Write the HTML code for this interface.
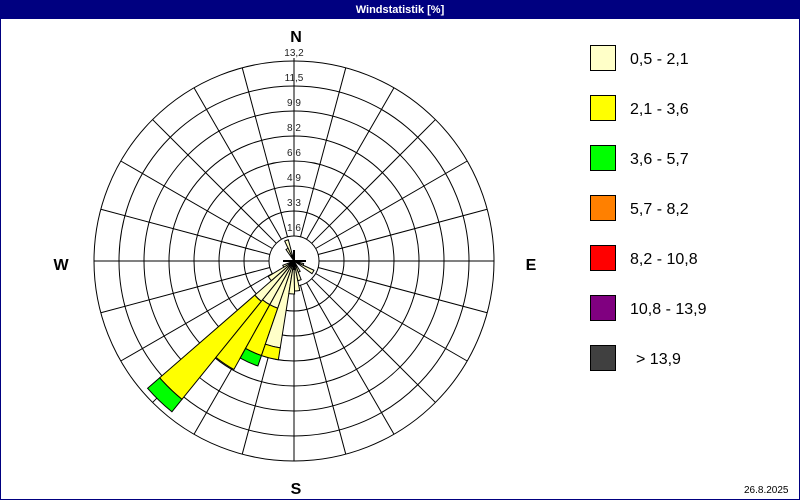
<!DOCTYPE html>
<html><head><meta charset="utf-8"><style>
html,body{margin:0;padding:0;background:#fff}
#w{position:relative;width:798px;height:498px;border:1px solid #000080;overflow:hidden;font-family:"Liberation Sans",Tahoma,sans-serif}
#t{position:absolute;left:0;top:0;width:798px;height:18px;background:#000080;color:#fff;font-size:11px;font-weight:bold;text-align:center;line-height:18px}
svg{position:absolute;left:-1px;top:-1px}
</style></head><body><div id="w"><div id="t">Windstatistik [%]</div>
<svg id="s" width="800" height="500" xmlns="http://www.w3.org/2000/svg" font-family="Liberation Sans, sans-serif"></svg>
</div>
<script>
var s=document.getElementById('s'),cx=294,cy=261,h='';
function P(b,r){var a=(b-90)*Math.PI/180;return [cx+r*Math.cos(a),cy+r*Math.sin(a)];}
for(var r=50;r<=200;r+=25)h+='<circle cx="'+cx+'" cy="'+cy+'" r="'+r+'" fill="none" stroke="#000" stroke-width="1"/>';
for(var b=0;b<360;b+=15){var p=P(b,25),q=P(b,200);h+='<line x1="'+p[0]+'" y1="'+p[1]+'" x2="'+q[0]+'" y2="'+q[1]+'" stroke="#000"/>';}
h+='<line x1="94" y1="'+cy+'" x2="494" y2="'+cy+'" stroke="#000"/><line x1="'+cx+'" y1="58" x2="'+cx+'" y2="461" stroke="#000"/>';
h+='<circle cx="'+cx+'" cy="'+cy+'" r="25" fill="#fff" stroke="#000"/>';
var C=['#ffffc8','#ffff00','#00ff00'];
var bars=[[224,[52,178,194]],[214,[50,124]],[204,[50,100,111]],[194,[88,100]],[184,[33]],[174,[30]],[164,[20]],[154,[12]],[120,[22]],[340,[22]],[330,[14]],[234,[30]],[244,[12]],[110,[10]]];
bars.forEach(function(x){var r0=0;x[1].forEach(function(r1,i){var a=P(x[0]-5,r0),b2=P(x[0]+5,r0),c=P(x[0]+5,r1),d=P(x[0]-5,r1);
h+='<path d="M'+a+' L'+d+' A'+r1+' '+r1+' 0 0 1 '+c+' L'+b2+(r0?' A'+r0+' '+r0+' 0 0 0 '+a:'')+'Z" fill="'+C[i]+'" stroke="#000" stroke-width="1"/>';r0=r1;});});
h+='<line x1="283" y1="'+cy+'" x2="306" y2="'+cy+'" stroke="#000" stroke-width="2"/><line x1="'+cx+'" y1="250" x2="'+cx+'" y2="270" stroke="#000" stroke-width="2"/>';
var L=['1,6','3,3','4,9','6,6','8,2','9,9','11,5','13,2'];
L.forEach(function(t,i){h+='<text x="'+cx+'" y="'+(cy-25*(i+1)-5)+'" font-size="10" text-anchor="middle" fill="#222">'+t+'</text>';});
h+='<text x="296" y="42" font-size="16" font-weight="bold" text-anchor="middle">N</text><text x="296" y="494" font-size="16" font-weight="bold" text-anchor="middle">S</text><text x="61" y="270" font-size="16" font-weight="bold" text-anchor="middle">W</text><text x="531" y="270" font-size="16" font-weight="bold" text-anchor="middle">E</text>';
var LG=[['#ffffc8','0,5 - 2,1'],['#ffff00','2,1 - 3,6'],['#00ff00','3,6 - 5,7'],['#ff8000','5,7 - 8,2'],['#ff0000','8,2 - 10,8'],['#800080','10,8 - 13,9'],['#404040','&gt; 13,9']];
LG.forEach(function(l,i){var y=45+50*i;h+='<rect x="590.5" y="'+(y+.5)+'" width="25" height="25" fill="'+l[0]+'" stroke="#000"/><text x="'+(i==6?636:630)+'" y="'+(y+19)+'" font-size="16" fill="#000">'+l[1]+'</text>';});
h+='<text x="744" y="493" font-size="10">26.8.2025</text>';
s.innerHTML=h;
</script></body></html>
